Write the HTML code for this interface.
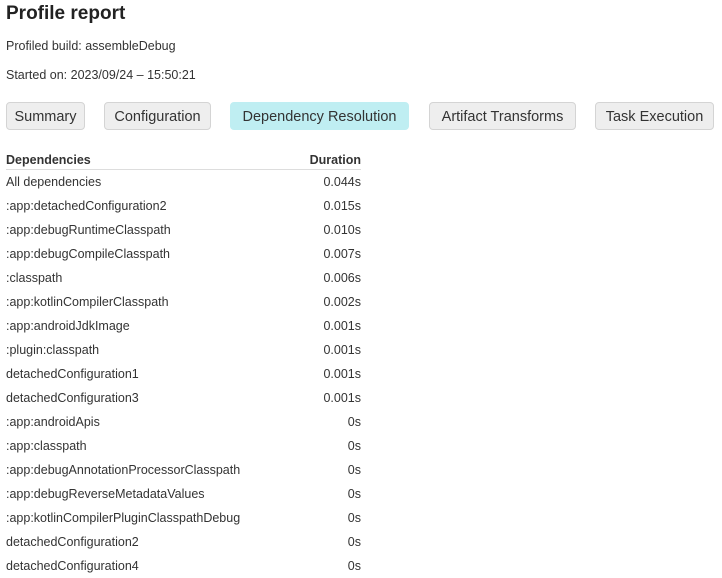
<!DOCTYPE html>
<html><head><style>
body{margin:0;background:#fff;font-family:"Liberation Sans",sans-serif;color:#222;}
h1{position:absolute;left:6px;top:1px;margin:0;font-size:19px;font-weight:bold;line-height:26px;}
.p{position:absolute;left:6px;font-size:12.5px;color:#333;}
.b{position:absolute;top:102px;height:28px;box-sizing:border-box;border:1px solid #d4d4d4;border-radius:4px;background:#eee;font-size:14.5px;line-height:28px;text-align:center;color:#333;}
.b.a{background:#bfeef2;border-color:#bfeef2;}
table{position:absolute;left:6px;top:152px;border-collapse:collapse;font-size:12.5px;color:#333;}
td,th{padding:0;height:24px;}
th{font-weight:bold;height:16px;padding-top:1px;vertical-align:top;text-align:left;border-bottom:1px solid #ddd;}
td{width:300px;}
td+td,th+th{text-align:right;width:55px;}
</style></head><body>
<h1>Profile report</h1>
<div class="p" style="top:39px">Profiled build: assembleDebug</div>
<div class="p" style="top:68px">Started on: 2023/09/24 – 15:50:21</div>
<div class="b" style="left:6px;width:79px">Summary</div>
<div class="b" style="left:104px;width:107px">Configuration</div>
<div class="b a" style="left:230px;width:179px">Dependency Resolution</div>
<div class="b" style="left:429px;width:147px">Artifact Transforms</div>
<div class="b" style="left:595px;width:119px">Task Execution</div>
<table>
<tr><th>Dependencies</th><th>Duration</th></tr>
<tr><td>All dependencies</td><td>0.044s</td></tr>
<tr><td>:app:detachedConfiguration2</td><td>0.015s</td></tr>
<tr><td>:app:debugRuntimeClasspath</td><td>0.010s</td></tr>
<tr><td>:app:debugCompileClasspath</td><td>0.007s</td></tr>
<tr><td>:classpath</td><td>0.006s</td></tr>
<tr><td>:app:kotlinCompilerClasspath</td><td>0.002s</td></tr>
<tr><td>:app:androidJdkImage</td><td>0.001s</td></tr>
<tr><td>:plugin:classpath</td><td>0.001s</td></tr>
<tr><td>detachedConfiguration1</td><td>0.001s</td></tr>
<tr><td>detachedConfiguration3</td><td>0.001s</td></tr>
<tr><td>:app:androidApis</td><td>0s</td></tr>
<tr><td>:app:classpath</td><td>0s</td></tr>
<tr><td>:app:debugAnnotationProcessorClasspath</td><td>0s</td></tr>
<tr><td>:app:debugReverseMetadataValues</td><td>0s</td></tr>
<tr><td>:app:kotlinCompilerPluginClasspathDebug</td><td>0s</td></tr>
<tr><td>detachedConfiguration2</td><td>0s</td></tr>
<tr><td>detachedConfiguration4</td><td>0s</td></tr>
</table>
</body></html>
